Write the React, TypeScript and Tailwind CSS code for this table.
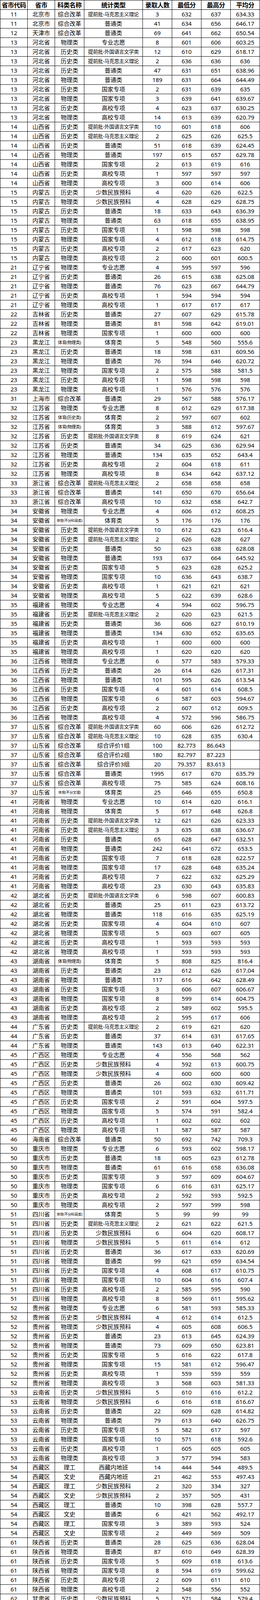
import React from "react";

// 省市代码|省市|科类名称|统计类型|录取人数|最低分|最高分|平均分
const raw = `11|北京市|综合改革|提前批-马克思主义理论|3|632|637|634.33
11|北京市|综合改革|普通类|41|634|656|646.17
12|天津市|综合改革|普通类|69|641|662|650.54
13|河北省|物理类|专业志愿|8|601|606|603.25
13|河北省|历史类|提前批-外国语言文学类|12|610|629|618.17
13|河北省|历史类|提前批-马克思主义理论|2|636|636|636
13|河北省|历史类|普通类|47|631|651|638.96
13|河北省|物理类|普通类|189|631|664|644.49
13|河北省|历史类|国家专项|2|631|639|635
13|河北省|物理类|国家专项|3|639|641|639.67
13|河北省|历史类|高校专项|4|623|637|630.25
13|河北省|物理类|高校专项|14|613|639|620.79
14|山西省|历史类|提前批-外国语言文学类|10|601|618|606
14|山西省|历史类|提前批-马克思主义理论|2|625|626|625.5
14|山西省|历史类|普通类|51|618|639|624.45
14|山西省|物理类|普通类|197|615|657|629.78
14|山西省|物理类|国家专项|2|613|619|616
14|山西省|历史类|高校专项|1|597|597|597
14|山西省|物理类|高校专项|3|600|614|606
15|内蒙古|历史类|少数民族预科|4|620|626|622.5
15|内蒙古|物理类|少数民族预科|4|628|629|628.75
15|内蒙古|历史类|普通类|18|633|643|636.39
15|内蒙古|物理类|普通类|63|618|655|638.95
15|内蒙古|历史类|国家专项|1|598|598|598
15|内蒙古|物理类|国家专项|4|612|618|614.75
15|内蒙古|历史类|高校专项|2|617|623|620
15|内蒙古|物理类|高校专项|2|600|601|600.5
21|辽宁省|物理类|专业志愿|4|595|597|596
21|辽宁省|历史类|普通类|26|615|638|625.08
21|辽宁省|物理类|普通类|76|623|667|644.79
21|辽宁省|历史类|高校专项|1|594|594|594
21|辽宁省|物理类|高校专项|1|617|617|617
22|吉林省|历史类|普通类|27|607|629|615.78
22|吉林省|物理类|普通类|81|598|642|619.01
22|吉林省|物理类|国家专项|1|600|600|600
23|黑龙江|体育(物理类)|体育类|5|548|560|555.6
23|黑龙江|历史类|普通类|18|598|631|609.56
23|黑龙江|物理类|普通类|76|594|646|620.72
23|黑龙江|物理类|国家专项|2|575|588|581.5
23|黑龙江|历史类|高校专项|1|598|598|598
23|黑龙江|物理类|高校专项|1|576|576|576
31|上海市|综合改革|普通类|29|567|588|576.17
32|江苏省|物理类|专业志愿|8|612|629|617.38
32|江苏省|体育(历史类)|体育类|2|597|607|602
32|江苏省|体育(物理类)|体育类|3|588|612|597.67
32|江苏省|历史类|提前批-外国语言文学类|8|619|624|621
32|江苏省|历史类|普通类|34|625|636|629.94
32|江苏省|物理类|普通类|134|635|652|643.4
32|江苏省|历史类|高校专项|2|604|618|611
32|江苏省|物理类|高校专项|8|634|642|637.12
33|浙江省|综合改革|提前批-马克思主义理论|2|658|658|658
33|浙江省|综合改革|普通类|141|650|670|656.64
33|浙江省|综合改革|高校专项|10|632|658|642.7
34|安徽省|物理类|专业志愿|4|606|612|608.25
34|安徽省|体育(不分科目类)|体育类|5|176|176|176
34|安徽省|历史类|提前批-外国语言文学类|10|612|623|616.4
34|安徽省|历史类|提前批-马克思主义理论|2|626|628|627
34|安徽省|历史类|普通类|50|623|638|628.08
34|安徽省|物理类|普通类|193|637|664|645.92
34|安徽省|历史类|国家专项|5|623|628|625.2
34|安徽省|物理类|国家专项|10|636|643|638.7
34|安徽省|历史类|高校专项|1|621|621|621
34|安徽省|物理类|高校专项|5|622|639|628.6
35|福建省|物理类|专业志愿|4|594|602|596.75
35|福建省|历史类|提前批-马克思主义理论|2|620|623|621.5
35|福建省|历史类|普通类|36|606|627|610.19
35|福建省|物理类|普通类|134|630|652|635.65
35|福建省|历史类|高校专项|1|600|600|600
35|福建省|物理类|高校专项|1|620|620|620
36|江西省|物理类|专业志愿|6|577|583|579.33
36|江西省|历史类|普通类|26|614|626|617.31
36|江西省|物理类|普通类|101|595|626|613.54
36|江西省|历史类|国家专项|4|601|614|608.5
36|江西省|物理类|国家专项|6|587|603|594.67
36|江西省|历史类|高校专项|2|607|612|609.5
36|江西省|物理类|高校专项|4|572|596|586.75
37|山东省|综合改革|提前批-外国语言文学类|60|606|626|612.72
37|山东省|综合改革|提前批-马克思主义理论|10|628|635|630.4
37|山东省|综合改革|综合评价1组|100|82.773|86.643|
37|山东省|综合改革|综合评价2组|180|82.797|87.223|
37|山东省|综合改革|综合评价3组|20|79.357|83.613|
37|山东省|综合改革|普通类|1995|617|670|635.79
37|山东省|综合改革|高校专项|75|585|624|608.16
37|山东省|体育(不分文理)|体育类|25|646|655|650.8
41|河南省|物理类|专业志愿|10|614|620|616.1
41|河南省|物理类|体育类|5|617|648|626.8
41|河南省|历史类|提前批-外国语言文学类|12|621|626|623.33
41|河南省|历史类|提前批-马克思主义理论|3|635|638|636.67
41|河南省|历史类|普通类|65|628|647|632.51
41|河南省|物理类|普通类|242|641|672|653.5
41|河南省|历史类|国家专项|7|618|628|622.57
41|河南省|物理类|国家专项|17|628|648|635.24
41|河南省|历史类|高校专项|7|622|632|625.29
41|河南省|物理类|高校专项|23|630|643|635.83
42|湖北省|历史类|提前批-外国语言文学类|6|598|607|600.83
42|湖北省|历史类|普通类|25|611|623|613.72
42|湖北省|物理类|普通类|118|616|635|625.19
42|湖北省|历史类|国家专项|4|604|610|607
42|湖北省|物理类|国家专项|5|603|607|605
42|湖北省|历史类|高校专项|1|593|593|593
42|湖北省|物理类|高校专项|1|593|593|593
43|湖南省|体育(物理类)|体育类|5|808|825|816.4
43|湖南省|历史类|普通类|23|612|626|617.04
43|湖南省|物理类|普通类|117|616|642|628.49
43|湖南省|历史类|国家专项|3|606|607|606.67
43|湖南省|物理类|国家专项|8|599|614|604.75
43|湖南省|历史类|高校专项|2|589|602|595.5
43|湖南省|物理类|高校专项|2|595|617|606
44|广东省|历史类|提前批-马克思主义理论|2|619|621|620
44|广东省|历史类|普通类|37|614|631|617.65
44|广东省|物理类|普通类|143|613|640|622.31
45|广西区|物理类|专业志愿|4|556|568|562
45|广西区|历史类|少数民族预科|4|592|613|600.75
45|广西区|物理类|少数民族预科|4|600|600|600
45|广西区|历史类|普通类|26|602|630|609.42
45|广西区|物理类|普通类|101|593|632|611.71
45|广西区|历史类|国家专项|2|591|604|597.5
45|广西区|物理类|国家专项|5|574|591|582.4
45|广西区|历史类|高校专项|1|602|602|602
45|广西区|物理类|高校专项|1|587|587|587
46|海南省|综合改革|普通类|50|692|742|709.3
50|重庆市|物理类|专业志愿|6|593|602|598.17
50|重庆市|历史类|普通类|18|605|623|612.78
50|重庆市|物理类|普通类|61|616|658|636.08
50|重庆市|历史类|国家专项|3|597|609|604.67
50|重庆市|物理类|国家专项|6|616|631|625.17
50|重庆市|历史类|高校专项|2|592|593|592.5
50|重庆市|物理类|高校专项|2|597|599|598
51|四川省|体育(不分科目类)|体育类|5|99|99|99
51|四川省|历史类|提前批-马克思主义理论|2|621|622|621.5
51|四川省|历史类|少数民族预科|6|604|620|608.17
51|四川省|物理类|少数民族预科|5|611|614|612
51|四川省|历史类|普通类|36|617|633|620.69
51|四川省|物理类|普通类|99|621|659|634.54
51|四川省|历史类|国家专项|4|608|617|610.75
51|四川省|物理类|国家专项|10|604|616|607.4
51|四川省|历史类|高校专项|2|585|595|590
51|四川省|物理类|高校专项|8|569|611|595.62
52|贵州省|物理类|专业志愿|6|581|593|585.33
52|贵州省|历史类|少数民族预科|4|612|614|612.5
52|贵州省|物理类|少数民族预科|4|605|608|606.5
52|贵州省|历史类|普通类|23|613|645|624.39
52|贵州省|物理类|普通类|73|609|650|623.81
52|贵州省|历史类|国家专项|5|616|622|617.8
52|贵州省|物理类|国家专项|15|581|612|596.47
52|贵州省|历史类|高校专项|1|559|559|559
52|贵州省|物理类|高校专项|3|568|603|581.33
53|云南省|历史类|少数民族预科|5|610|616|612.2
53|云南省|物理类|少数民族预科|6|616|618|616.67
53|云南省|历史类|普通类|22|609|628|614.82
53|云南省|物理类|普通类|79|613|640|626.75
53|云南省|历史类|国家专项|5|582|617|597
53|云南省|物理类|国家专项|10|571|618|592.6
53|云南省|历史类|高校专项|1|605|605|605
53|云南省|物理类|高校专项|3|577|594|583
54|西藏区|理工|西藏内地班|14|444|544|489.5
54|西藏区|文史|西藏内地班|21|462|553|497.43
54|西藏区|理工|少数民族预科|2|320|334|327
54|西藏区|文史|少数民族预科|2|357|505|431
54|西藏区|理工|普通类|10|398|628|557.7
54|西藏区|文史|普通类|6|421|562|492.17
54|西藏区|理工|国家专项|3|389|593|524
54|西藏区|文史|国家专项|2|449|569|509
61|陕西省|历史类|普通类|28|625|636|628.04
61|陕西省|物理类|普通类|87|610|649|628.39
61|陕西省|历史类|国家专项|5|609|618|613.6
61|陕西省|物理类|国家专项|8|594|619|599.62
61|陕西省|历史类|高校专项|2|609|611|610
61|陕西省|物理类|高校专项|2|548|556|552
62|甘肃省|历史类|少数民族预科|5|571|584|579.4
62|甘肃省|物理类|少数民族预科|5|581|584|582
62|甘肃省|历史类|普通类|34|596|615|603.97
62|甘肃省|物理类|普通类|103|550|635|602.71
62|甘肃省|历史类|国家专项|6|590|601|593.17
62|甘肃省|物理类|国家专项|15|572|591|576.27
62|甘肃省|历史类|高校专项|1|568|568|568
62|甘肃省|物理类|高校专项|3|554|578|565.33
63|青海省|历史类|少数民族预科|4|526|549|535
63|青海省|物理类|少数民族预科|4|525|539|530.75
63|青海省|历史类|普通类|15|545|584|557.4
63|青海省|物理类|普通类|49|524|599|556.59
63|青海省|物理类|国家专项|2|491|503|497
63|青海省|历史类|高校专项|2|491|496|493.5
63|青海省|物理类|高校专项|4|457|512|480.5
64|宁夏区|历史类|少数民族预科|4|553|565|557.5
64|宁夏区|物理类|少数民族预科|4|558|570|563
64|宁夏区|历史类|普通类|14|568|580|574
64|宁夏区|物理类|普通类|56|534|598|578.16
64|宁夏区|物理类|国家专项|3|505|526|515.67
64|宁夏区|历史类|高校专项|1|543|543|543
64|宁夏区|物理类|高校专项|1|504|504|504
65|新疆区|理工|新疆内地班|22|559|610|575.23
65|新疆区|文史|新疆内地班|8|553|588|565.5
65|新疆区|理工|普通类|61|555|617|578.43
65|新疆区|文史|普通类|18|556|575|560.89
65|新疆区|理工|民族班|31|413|542|491.97
65|新疆区|文史|民族班|36|486|521|497.64
65|新疆区|理工|国家专项|5|465|552|527.6
65|新疆区|文史|国家专项|2|557|569|563
99|港澳台|理工|联招|26|610|623|614.73
99|港澳台|文史|联招|24|564|606|574.13`;

const rows = raw.split("\n").map((line) => line.split("|"));

const headers = ["省市代码", "省市", "科类名称", "统计类型", "录取人数", "最低分", "最高分", "平均分"];

// Excel shrink-to-fit: long labels come out smaller
function subjectClass(s: string) {
  if (s.startsWith("体育(不分")) return "text-[9px] tracking-[-0.3px]";
  if (s.startsWith("体育(")) return "text-[11px] tracking-[-0.4px]";
  return "text-[15px]";
}

function typeClass(s: string) {
  if (s.startsWith("提前批")) return "text-[13px] tracking-[-0.4px]";
  return "text-[15px]";
}

const cell =
  "flex h-6 min-w-0 items-center justify-center overflow-hidden whitespace-nowrap border-r border-b border-black leading-none";

export default function App() {
  return (
    <div
      className="w-[666px] bg-white leading-none text-black"
      style={{ fontFamily: '"Noto Sans", "Noto Sans CJK SC", sans-serif' }}
    >
      <div className="grid grid-cols-[70px_70px_75px_150px_75px_75px_75px_75px] auto-rows-[24px] border-l border-t border-black">
        {headers.map((h) => (
          <div key={h} className={`${cell} text-[16px] font-bold tracking-[-0.5px]`}>
            {h}
          </div>
        ))}
        {rows.map((r, i) =>
          r.map((v, j) => {
            let cls = "text-[15px]";
            if (j === 2) cls = subjectClass(v);
            if (j === 3) cls = typeClass(v);
            return (
              <div key={`${i}-${j}`} className={`${cell} ${cls}`}>
                {v}
              </div>
            );
          })
        )}
      </div>
    </div>
  );
}
